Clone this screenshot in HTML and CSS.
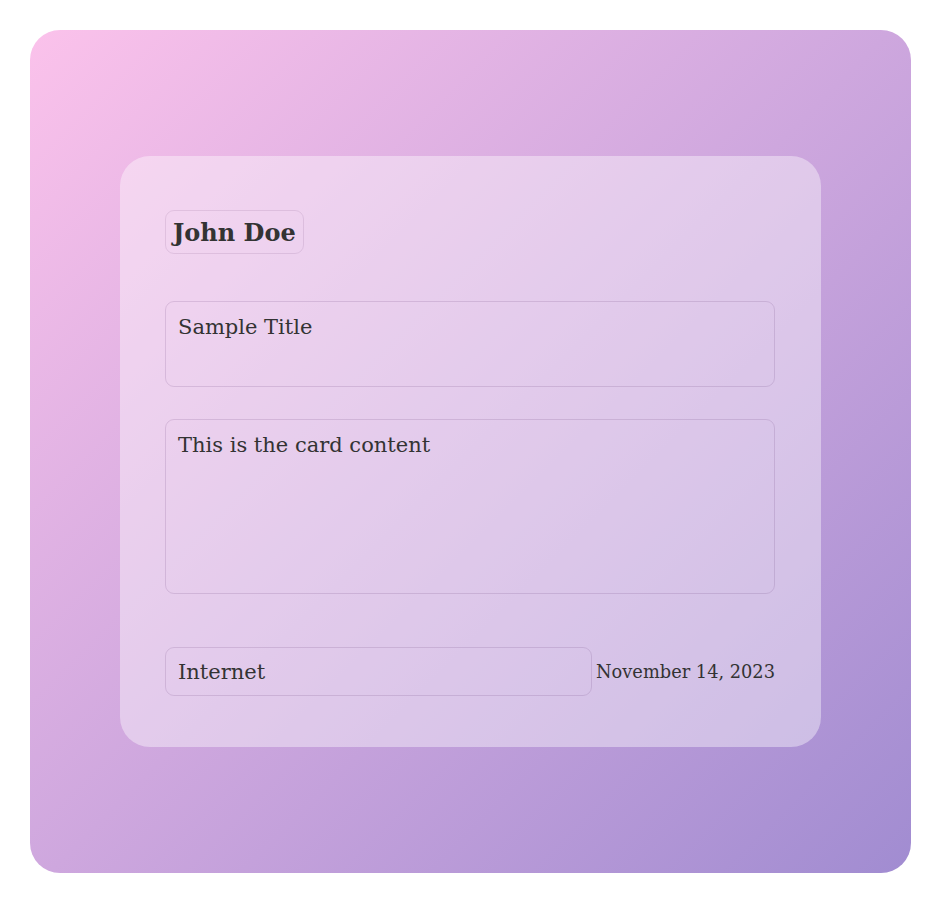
FILE: index.html
```html
<!DOCTYPE html>
<html>
<head>
<meta charset="utf-8">
<link rel="stylesheet" href="styles.css">
</head>
<body>
<div class="stage">
  <div class="card">
    <div class="author">John Doe</div>
    <div class="field title">Sample Title</div>
    <div class="field content">This is the card content</div>
    <div class="footer">
      <div class="field source">Internet</div>
      <div class="date">November 14, 2023</div>
    </div>
  </div>
</div>
</body>
</html>
```

FILE: styles.css
```css
html, body {
  margin: 0;
  padding: 0;
  background: #fff;
}
body {
  padding: 30px;
  font-family: "DejaVu Serif", serif;
  color: #333;
}
.stage {
  height: 843px;
  border-radius: 30px;
  background: linear-gradient(135deg, #fbc2eb 0%, #a18cd1 100%);
  display: flex;
  align-items: center;
  justify-content: center;
}
.card {
  width: 701px;
  box-sizing: border-box;
  height: 591px;
  padding: 54px 46px 0 45px;
  border-radius: 30px;
  background: rgba(255, 255, 255, 0.4);
  display: flex;
  flex-direction: column;
}
.author {
  align-self: flex-start;
  font-weight: bold;
  font-size: 24px;
  line-height: 26px;
  padding: 9px 7px 7px;
  border: 1px solid rgba(120, 80, 130, 0.15);
  border-radius: 9px;
}
.field {
  border: 1px solid rgba(110, 70, 130, 0.18);
  border-radius: 9px;
  box-sizing: border-box;
  padding: 13px 12px 11px;
  font-size: 21px;
  line-height: 24px;
}
.title {
  margin-top: 47px;
  height: 86px;
}
.content {
  margin-top: 32px;
  height: 175px;
}
.footer {
  margin-top: 53px;
  display: flex;
  align-items: center;
  gap: 3px;
}
.source {
  width: 427px;
  height: 49px;
  padding: 12px 12px 10px;
}
.date {
  font-size: 17.8px;
  white-space: nowrap;
  margin-left: auto;
}
```
